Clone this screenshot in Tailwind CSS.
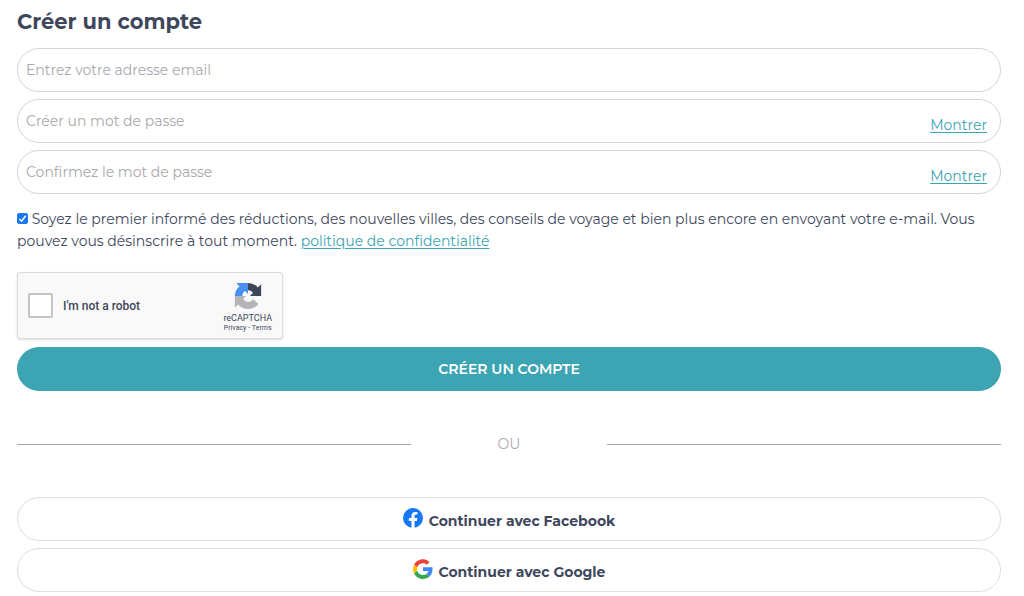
<!DOCTYPE html>
<html lang="fr">

<head>
    <meta charset="UTF-8">
    <meta name="viewport" content="width=device-width, initial-scale=1.0">
    <title>Créer un compte</title>
    <script src="https://cdn.jsdelivr.net/npm/@tailwindcss/browser@4"></script>
</head>

<body class="bg-white font-['Montserrat','Inter',sans-serif] text-sm text-[#40475c]">
    <main class="pt-2 pb-1 pl-[17px] pr-[23px]">
        <h1 class="text-[21px] leading-7 font-bold">Créer un compte</h1>

        <form class="mt-3" onsubmit="return false">
            <div class="flex flex-col gap-[7px]">
                <input id="email" type="email" aria-label="Adresse email" placeholder="Entrez votre adresse email"
                    class="w-full h-11 px-2 border border-[#d5d5d7] rounded-full placeholder:text-[#a8a9ad] focus:outline-none focus:border-[#3ca4b3]">
                <div class="relative">
                    <input id="password" type="password" aria-label="Mot de passe" placeholder="Créer un mot de passe"
                        class="block w-full h-11 pl-2 pr-24 border border-[#d5d5d7] rounded-full placeholder:text-[#a8a9ad] focus:outline-none focus:border-[#3ca4b3]">
                    <button type="button" onclick="toggle('password')"
                        class="absolute right-[14px] top-[15px] leading-[22px] text-[#3ca4b3] underline underline-offset-2">Montrer</button>
                </div>
                <div class="relative">
                    <input id="confirm" type="password" aria-label="Confirmation" placeholder="Confirmez le mot de passe"
                        class="block w-full h-11 pl-2 pr-24 border border-[#d5d5d7] rounded-full placeholder:text-[#a8a9ad] focus:outline-none focus:border-[#3ca4b3]">
                    <button type="button" onclick="toggle('confirm')"
                        class="absolute right-[14px] top-[15px] leading-[22px] text-[#3ca4b3] underline underline-offset-2">Montrer</button>
                </div>
            </div>

            <p class="mt-[14px] leading-[22px]">
                <input id="newsletter" type="checkbox" checked class="appearance-none w-[11px] h-[11px] rounded-xs border border-[#767676] checked:border-[#1a78f0] checked:bg-[#1a78f0] checked:bg-[url('data:image/svg+xml,%3Csvg%20xmlns=%22http://www.w3.org/2000/svg%22%20viewBox=%220%200%2010%2010%22%3E%3Cpath%20d=%22M1.5%205.5L4%208L8.5%202%22%20fill=%22none%22%20stroke=%22white%22%20stroke-width=%221.6%22/%3E%3C/svg%3E')]">
                <label for="newsletter">Soyez le premier informé des réductions, des nouvelles villes, des conseils de voyage et bien plus encore en envoyant votre e-mail. Vous pouvez vous désinscrire à tout moment.</label>
                <a href="#" class="text-[#3ca4b3] underline underline-offset-2">politique de confidentialité</a>
            </p>

            <div class="mt-5 w-[266px] h-[67px] px-[10px] flex items-center bg-[#f9f9f9] border border-[#dcdcde] rounded-[3px] shadow-sm font-[Roboto,sans-serif]">
                <input id="robot" type="checkbox" class="appearance-none w-[25px] h-[25px] bg-white border-2 border-[#c4c4c8] rounded-xs checked:bg-[#4a90e2]">
                <label for="robot" class="ml-[10px] text-xs font-medium">I'm not a robot</label>
                <div class="ml-auto pt-1 flex flex-col items-center">
                    <svg class="w-7 h-7" viewBox="0 0 64 64">
                        <path fill="#3f465a" d="M62 32V5l-7.500 7.500A30 30 0 0 0 32 2v17c5 0 9 2.500 11.300 6.200L36.500 32z" />
                        <path fill="#4a90f0" d="M32 2H5l7.500 7.500A30 30 0 0 0 2 32h17c0-5 2.500-9 6.200-11.300L32 27.500z" />
                        <path fill="#b5b5b9" d="M2 32v27l7.500-7.500A30 30 0 0 0 56 50L43.500 39.500A13 13 0 0 1 21 38.500l6.500-6.500z" />
                    </svg>
                    <span class="mt-0.5 text-[9px] leading-3">reCAPTCHA</span>
                    <span class="text-[7px] leading-[9px]"><a href="#">Privacy</a>&nbsp;-&nbsp;<a href="#">Terms</a></span>
                </div>
            </div>

            <button type="submit" class="block mt-2 w-full h-11 rounded-full bg-[#3ca4b3] text-white font-semibold">CRÉER UN COMPTE</button>
        </form>

        <div class="mt-[42px] flex items-center leading-[22px] text-[#a8a9ad]">
            <hr class="flex-2 border-[#a8a9ad]">
            <span class="flex-1 text-center">OU</span>
            <hr class="flex-2 border-[#a8a9ad]">
        </div>

        <div class="mt-[42px] flex flex-col gap-[7px]">
            <button type="button" class="flex items-center justify-center gap-[6px] w-full h-11 border border-[#dedee0] rounded-full font-bold">
                <svg class="w-5 h-5 mb-0.5" viewBox="0 0 24 24">
                    <circle cx="12" cy="12" r="12" fill="#1877f2" />
                    <path fill="#fff" d="M10.125 23.854V15.469H7.078V12h3.047V9.356c0-3.007 1.792-4.669 4.533-4.669 1.312 0 2.686.235 2.686.235v2.953h-1.514c-1.491 0-1.955.925-1.955 1.875V12h3.328l-.532 3.469h-2.796v8.385a12 12 0 0 1-3.750 0z" />
                </svg>
                <span class="mt-1">Continuer avec Facebook</span>
            </button>
            <button type="button" class="flex items-center justify-center gap-[6px] w-full h-11 border border-[#dedee0] rounded-full font-bold">
                <svg class="w-5 h-5 mb-0.5" viewBox="2 2 44 44">
                    <path fill="#ea4335" d="M24 11.500c3.200 0 6 1.100 8.200 3.200l6.200-6.200C34.600 5 29.700 2.500 24 2.500 15.400 2.500 8 7.400 4.400 14.600l7.200 5.600C13.300 15.100 18.200 11.500 24 11.500z" />
                    <path fill="#4285f4" d="M45 24.500c0-1.600-.1-3.100-.4-4.500H24v8.500h11.800c-.5 2.700-2.100 5-4.400 6.600l7 5.400C42.500 36.700 45 31.100 45 24.500z" />
                    <path fill="#fbbc05" d="M11.600 28.300a13 13 0 0 1 0-8.100l-7.200-5.600a21.500 21.500 0 0 0 0 19.300z" />
                    <path fill="#34a853" d="M24 46c5.800 0 10.700-1.900 14.400-5.500l-7-5.400c-2 1.300-4.500 2.100-7.400 2.100-5.800 0-10.700-3.700-12.400-8.900l-7.200 5.600C8 41.100 15.400 46 24 46z" />
                </svg>
                <span class="mt-1">Continuer avec Google</span>
            </button>
        </div>
    </main>
</body>

</html>

<script>
    const toggle = (id) => {
        let input = document.getElementById(id)
        input.type = input.type === "password" ? "text" : "password"
    }
</script>
